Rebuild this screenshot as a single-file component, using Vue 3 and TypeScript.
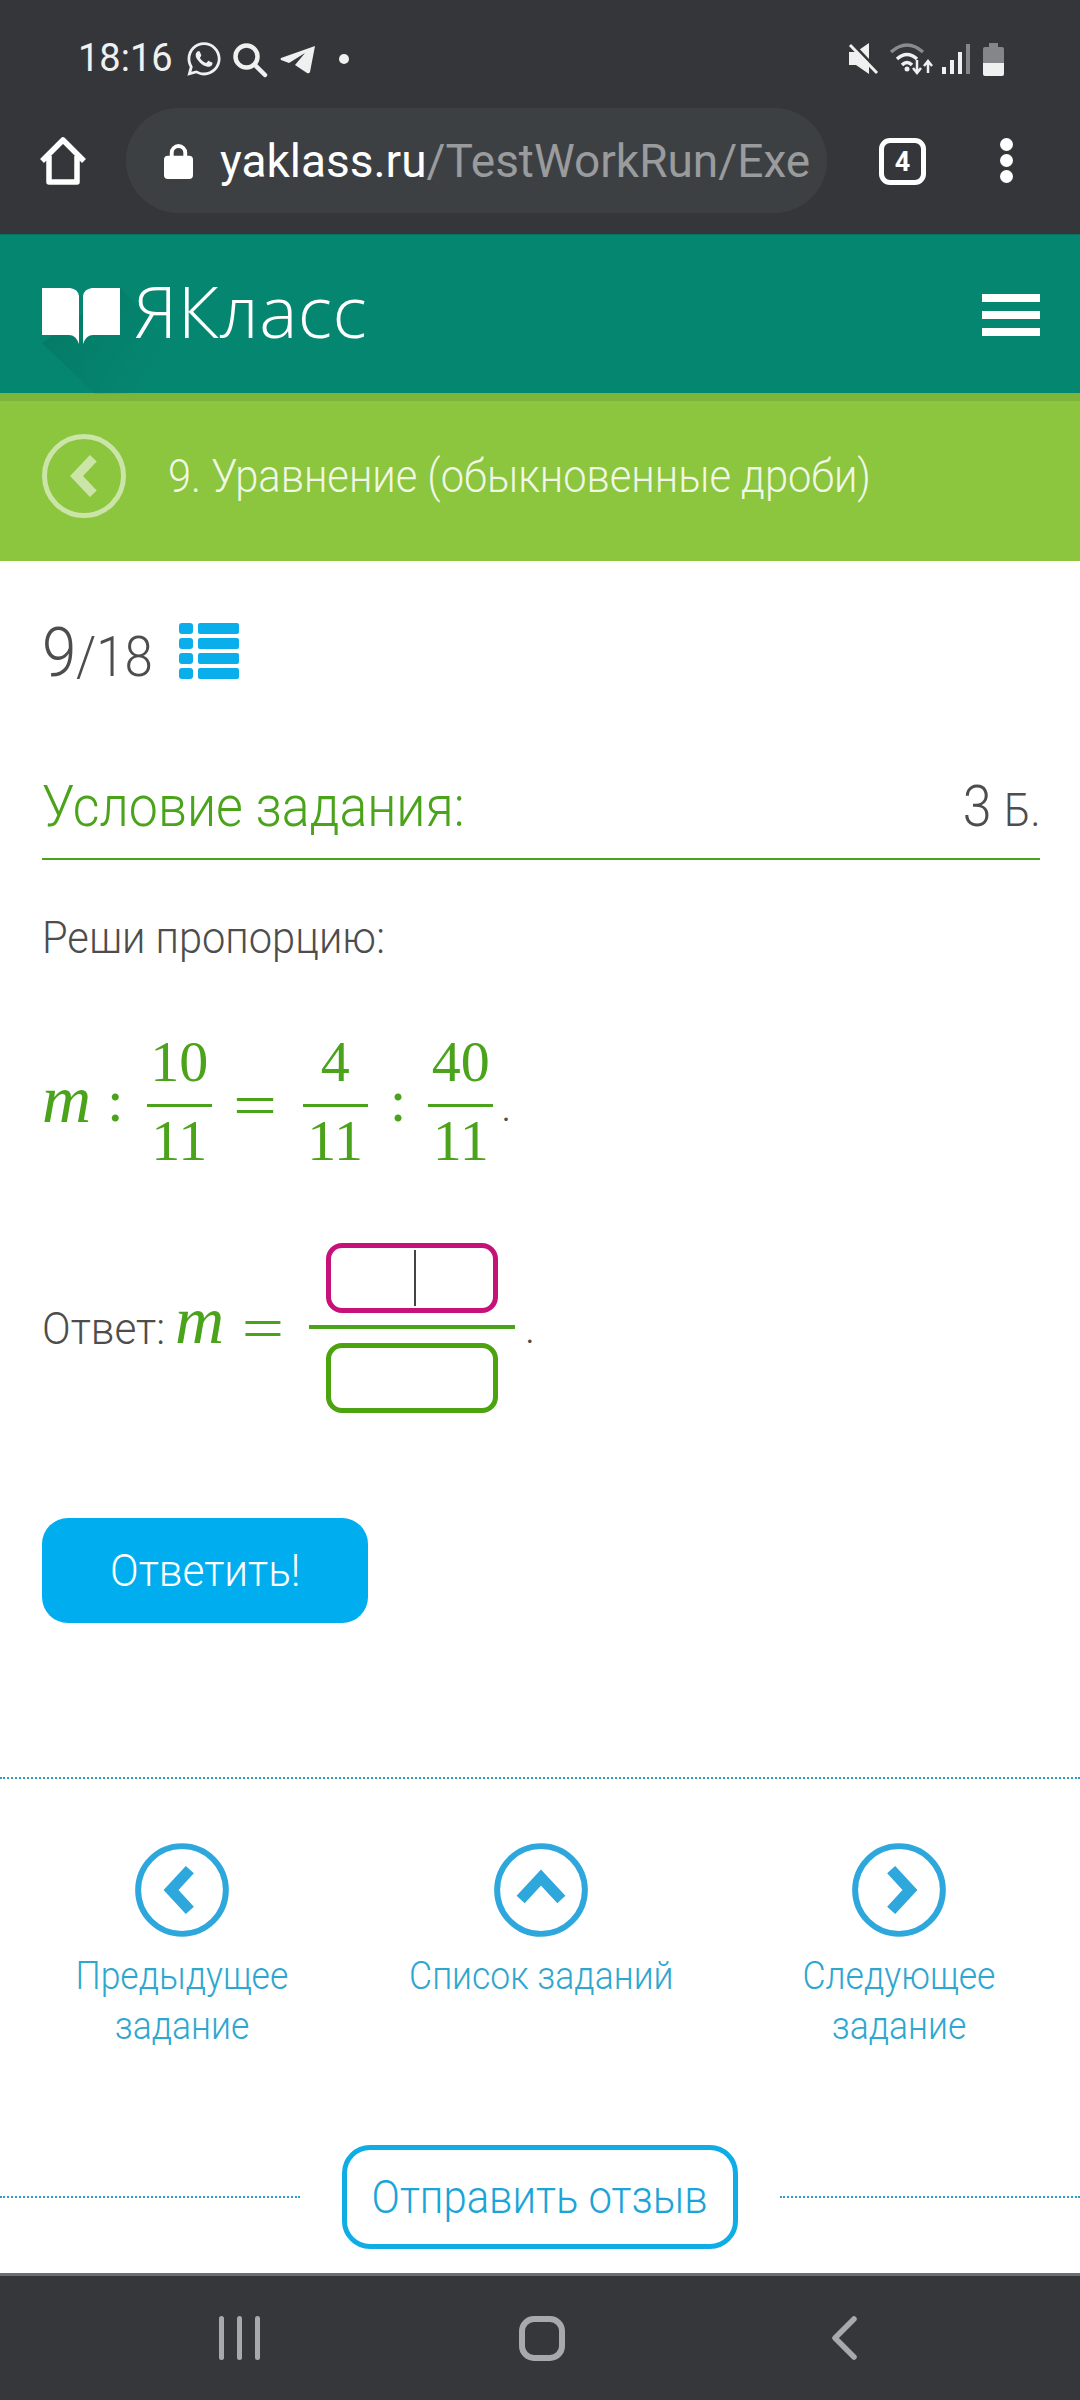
<script setup lang="ts">
interface NavLink {
  label: string[]
  chevron: string
}

const navLinks: NavLink[] = [
  { label: ['Предыдущее', 'задание'], chevron: 'M35 17 L23 30 L35 43' },
  { label: ['Список заданий'], chevron: 'M17 36 L30 22 L43 36' },
  { label: ['Следующее', 'задание'], chevron: 'M25 17 L37 30 L25 43' },
]
</script>

<template>
  <div class="screen">
    <div class="status">
      <span class="status__time">18:16</span>
      <svg class="status__wa" viewBox="0 0 24 24" fill="#f0f0f0">
        <path d="M12.04 2C6.58 2 2.13 6.45 2.13 11.91C2.13 13.66 2.59 15.36 3.45 16.86L2.05 22L7.3 20.62C8.75 21.41 10.38 21.83 12.04 21.83C17.5 21.83 21.95 17.38 21.95 11.92C21.95 9.27 20.92 6.78 19.05 4.91C17.18 3.03 14.69 2 12.04 2M12.05 3.67C14.25 3.67 16.31 4.53 17.87 6.09C19.42 7.65 20.28 9.72 20.28 11.92C20.28 16.46 16.58 20.15 12.04 20.15C10.56 20.15 9.11 19.76 7.85 19L7.55 18.83L4.43 19.65L5.26 16.61L5.06 16.29C4.24 15 3.8 13.47 3.8 11.91C3.81 7.37 7.5 3.67 12.05 3.67M8.53 7.33C8.37 7.33 8.1 7.39 7.87 7.64C7.65 7.89 7 8.5 7 9.71C7 10.93 7.89 12.1 8 12.27C8.14 12.44 9.76 14.94 12.25 16C12.84 16.27 13.3 16.42 13.66 16.53C14.25 16.72 14.79 16.69 15.22 16.63C15.7 16.56 16.68 16.03 16.89 15.45C17.1 14.87 17.1 14.38 17.04 14.27C16.97 14.17 16.81 14.11 16.56 14C16.31 13.86 15.09 13.26 14.87 13.18C14.64 13.1 14.5 13.06 14.31 13.3C14.15 13.55 13.67 14.11 13.53 14.27C13.38 14.44 13.24 14.46 13 14.34C12.74 14.21 11.94 13.95 11 13.11C10.26 12.45 9.77 11.64 9.62 11.39C9.5 11.15 9.61 11 9.73 10.89C9.84 10.78 10 10.6 10.1 10.45C10.23 10.31 10.27 10.2 10.35 10.04C10.43 9.87 10.39 9.73 10.33 9.61C10.27 9.5 9.77 8.26 9.56 7.77C9.36 7.29 9.16 7.35 9 7.34C8.86 7.34 8.7 7.33 8.53 7.33Z" />
      </svg>
      <svg class="status__search" viewBox="0 0 36 36" fill="none" stroke="#f0f0f0" stroke-width="4.5" stroke-linecap="round">
        <circle cx="14.5" cy="14.5" r="11" />
        <path d="M23 23 L33 33" />
      </svg>
      <svg class="status__plane" viewBox="0 0 36 30" fill="#f0f0f0">
        <path d="M35 1 L1 13 Q0 14 1 15 L9 18 L25 8 L15 20 L27 28 Q29 29 30 27 Z" />
      </svg>
      <span class="status__dot"></span>
      <span class="status__spacer"></span>
      <svg class="status__mute" viewBox="0 0 32 32">
        <path d="M1 9 H8 L21 0 V31 L8 22 H1 Z" fill="#f0f0f0" />
        <path d="M4 0 L31 29" stroke="#35363a" stroke-width="3" />
        <path d="M2 2 L29 30" stroke="#f0f0f0" stroke-width="3" />
      </svg>
      <svg class="status__wifi" viewBox="0 0 46 34" fill="none">
        <path d="M2 10 Q18 -4 34 10" stroke="#8a8b8d" stroke-width="3.5" />
        <path d="M8 17 Q18 8 28 17" stroke="#f0f0f0" stroke-width="3.5" />
        <path d="M13 23 Q18 18 23 23" stroke="#f0f0f0" stroke-width="3.5" />
        <circle cx="18" cy="27" r="2.5" fill="#f0f0f0" />
        <path d="M28 18 V30 M24 26 L28 31 L32 26 M39 31 V20 M35 24 L39 19 L43 24" stroke="#f0f0f0" stroke-width="2.5" />
      </svg>
      <svg class="status__signal" viewBox="0 0 28 32">
        <rect x="0" y="24" width="4" height="7" fill="#f0f0f0" />
        <rect x="8" y="17" width="4" height="14" fill="#f0f0f0" />
        <rect x="16" y="9" width="4" height="22" fill="#f0f0f0" />
        <rect x="24" y="1" width="4" height="30" fill="#85868a" />
      </svg>
      <svg class="status__battery" viewBox="0 0 21 33">
        <path d="M6 0 H15 V4 H19 Q21 4 21 6 V20 H0 V6 Q0 4 2 4 H6 Z" fill="#85868a" />
        <path d="M0 20 H21 V31 Q21 33 19 33 H2 Q0 33 0 31 Z" fill="#f0f0f0" />
      </svg>
    </div>

    <div class="toolbar">
      <svg class="toolbar__home" viewBox="0 0 48 48" fill="none" stroke="#fff" stroke-width="5.5" stroke-linejoin="round">
        <path d="M3 24 L24 3 L45 24 M10 19 V45 H38 V19" />
      </svg>
      <div class="url">
        <svg class="url__lock" viewBox="0 0 30 37">
          <path d="M8 14 V10 A7 7 0 0 1 22 10 V14" fill="none" stroke="#fff" stroke-width="4" />
          <rect x="0" y="13" width="30" height="24" rx="4" fill="#fff" />
        </svg>
        <span class="url__text">yaklass.ru<span class="url__path">/TestWorkRun/Exe</span></span>
      </div>
      <span class="toolbar__tabs">4</span>
      <div class="toolbar__menu">
        <i></i><i></i><i></i>
      </div>
    </div>

    <header class="brand">
      <svg class="brand__shadow" viewBox="0 0 300 159">
        <defs>
          <linearGradient id="brandFade" x1="0" y1="0" x2="1" y2="0.35">
            <stop offset="0.1" stop-color="#04705e" stop-opacity="0.55" />
            <stop offset="0.8" stop-color="#04705e" stop-opacity="0" />
          </linearGradient>
        </defs>
        <path d="M42 108 L120 52 L218 159 H95 Z" fill="url(#brandFade)" />
      </svg>
      <svg class="brand__book" viewBox="0 0 78 56" fill="#fff">
        <path d="M0 0 H28 Q36 1 37 8 V56 Q34 47 27 47 H0 Z" />
        <path d="M78 0 H50 Q42 1 41 8 V56 Q44 47 51 47 H78 Z" />
      </svg>
      <span class="brand__name">ЯКласс</span>
      <div class="brand__burger">
        <i></i><i></i><i></i>
      </div>
    </header>

    <div class="topic">
      <span class="topic__back">
        <svg viewBox="0 0 30 44" fill="none" stroke="#fff" stroke-opacity="0.55" stroke-width="10">
          <path d="M25 3 L7 22 L25 41" />
        </svg>
      </span>
      <span class="narrow topic__title">9. Уравнение (обыкновенные дроби)</span>
    </div>

    <main class="task">
      <div class="counter">
        <span class="narrow counter__num">9</span><span class="narrow counter__total">/18</span>
        <span class="counter__list">
          <template v-for="n in 4" :key="n">
            <i class="counter__bullet"></i><i class="counter__bar"></i>
          </template>
        </span>
      </div>

      <div class="cond">
        <span class="narrow cond__title">Условие задания:</span>
        <span class="narrow cond__points">3 <small>Б.</small></span>
      </div>

      <p class="narrow prompt">Реши пропорцию:</p>

      <div class="math math--task">
        <i class="math__var">m</i>
        <span class="math__op math__op--colon-first">:</span>
        <span class="frac"><span>10</span><span>11</span></span>
        <span class="math__op math__op--eq">=</span>
        <span class="frac"><span>4</span><span>11</span></span>
        <span class="math__op math__op--colon">:</span>
        <span class="frac"><span>40</span><span>11</span></span>
        <span class="math__period">.</span>
      </div>

      <div class="math answer">
        <span class="narrow answer__label">Ответ:</span>
        <i class="math__var">m</i>
        <span class="math__op answer__eq">=</span>
        <span class="answer__frac">
          <span class="box box--focus"><i class="box__caret"></i></span>
          <span class="answer__bar"></span>
          <span class="box"></span>
        </span>
        <span class="math__period">.</span>
      </div>

      <button type="button" class="submit"><span class="narrow submit__text">Ответить!</span></button>
    </main>

    <nav class="pager">
      <a v-for="link in navLinks" :key="link.label[0]" class="pager__item">
        <svg class="pager__icon" viewBox="0 0 60 60" fill="none" stroke="#2ea7dc">
          <circle cx="30" cy="30" r="28" stroke-width="3.8" />
          <path :d="link.chevron" stroke-width="7" />
        </svg>
        <span class="pager__label">
          <span v-for="line in link.label" :key="line" class="narrow">{{ line }}</span>
        </span>
      </a>
    </nav>

    <div class="feedback">
      <span class="feedback__rule"></span>
      <button type="button" class="feedback__btn"><span class="narrow">Отправить отзыв</span></button>
      <span class="feedback__rule"></span>
    </div>

    <div class="sysnav">
      <svg class="sysnav__recents" viewBox="0 0 41 44" fill="#a8a9ab">
        <rect x="0" y="0" width="5" height="44" rx="2.5" />
        <rect x="18" y="0" width="5" height="44" rx="2.5" />
        <rect x="36" y="0" width="5" height="44" rx="2.5" />
      </svg>
      <span class="sysnav__home"></span>
      <svg class="sysnav__back" viewBox="0 0 26 44" fill="none" stroke="#a8a9ab" stroke-width="5.5" stroke-linecap="round" stroke-linejoin="round">
        <path d="M23 3 L4 22 L23 41" />
      </svg>
    </div>
  </div>
</template>

<style scoped>
.screen {
  position: relative;
  display: flex;
  flex-direction: column;
  width: 1080px;
  height: 2400px;
  overflow: hidden;
  background: #fff;
  font-family: Roboto, 'Noto Sans', sans-serif;
  font-weight: 300;
  color: #4d4d4d;
}

/* the site's light face runs narrower than installed Roboto */
.narrow {
  display: inline-block;
  transform: scaleX(0.91);
  white-space: nowrap;
}

.status {
  display: flex;
  align-items: center;
  height: 108px;
  padding: 10px 76px 0 78px;
  box-sizing: border-box;
  background: #35363a;
  color: #f0f0f0;
}

.status__time {
  width: 107px;
  font-size: 38px;
  font-weight: 400;
  line-height: 44px;
  margin-top: -2px;
}

.status__wa {
  width: 40px;
  height: 40px;
  margin: 0 0 0 -1px;
}

.status__search {
  width: 36px;
  height: 36px;
  margin: 2px 0 0 8px;
}

.status__plane {
  width: 36px;
  height: 30px;
  margin: 2px 0 0 12px;
}

.status__dot {
  width: 10px;
  height: 10px;
  margin: 0 0 0 23px;
  border-radius: 50%;
  background: #f0f0f0;
}

.status__spacer {
  flex: 1;
}

.status__mute {
  width: 32px;
  height: 32px;
}

.status__wifi {
  width: 46px;
  height: 34px;
  margin-left: 9px;
}

.status__signal {
  width: 28px;
  height: 32px;
  margin-left: 7px;
}

.status__battery {
  width: 21px;
  height: 33px;
  margin-left: 13px;
}

.toolbar {
  display: flex;
  align-items: flex-start;
  height: 126px;
  box-sizing: border-box;
  padding-left: 39px;
  background: #35363a;
}

.toolbar__home {
  width: 48px;
  height: 48px;
  margin-top: 29px;
}

.url {
  display: flex;
  align-items: center;
  width: 701px;
  height: 105px;
  margin-left: 39px;
  padding-left: 38px;
  box-sizing: border-box;
  border-radius: 53px;
  background: #3d4043;
}

.url__lock {
  width: 29px;
  height: 36px;
  flex: none;
}

.url__text {
  margin-left: 27px;
  font-size: 46px;
  font-weight: 400;
  color: #fff;
  white-space: nowrap;
}

.url__path {
  color: #9a9b9d;
}

.toolbar__tabs {
  display: flex;
  align-items: center;
  justify-content: center;
  width: 47px;
  height: 47px;
  margin: 30px 0 0 52px;
  box-sizing: border-box;
  border: 5px solid #fff;
  border-radius: 11px;
  font-size: 27px;
  font-weight: 700;
  color: #fff;
}

.toolbar__menu {
  display: flex;
  flex-direction: column;
  gap: 3px;
  margin: 30px 0 0 74px;
}

.toolbar__menu i {
  width: 13px;
  height: 13px;
  border-radius: 50%;
  background: #fff;
}

.brand {
  position: relative;
  display: flex;
  align-items: flex-start;
  height: 159px;
  padding: 53px 40px 0 42px;
  box-sizing: border-box;
  background: #058670;
  border-top: 1px solid #04705e;
}

.brand__shadow {
  position: absolute;
  left: 0;
  top: 0;
  width: 300px;
  height: 159px;
}

.brand__book {
  position: relative;
  width: 78px;
  height: 56px;
}

.brand__name {
  position: relative;
  margin: -26px 0 0 14px;
  font-family: 'Open Sans', sans-serif;
  font-size: 72px;
  font-weight: 300;
  line-height: 96px;
  letter-spacing: 0.5px;
  color: #fff;
}

.brand__burger {
  position: relative;
  display: flex;
  flex-direction: column;
  gap: 9px;
  margin: 6px 0 0 auto;
}

.brand__burger i {
  width: 58px;
  height: 8px;
  background: #fff;
}

.topic {
  display: flex;
  align-items: center;
  height: 168px;
  padding: 0 42px 10px;
  box-sizing: border-box;
  background: #8cc63f;
  border-top: 8px solid #7cb53a;
}

.topic__back {
  display: flex;
  align-items: center;
  justify-content: center;
  width: 84px;
  height: 84px;
  box-sizing: border-box;
  border: 5px solid rgba(255, 255, 255, 0.55);
  border-radius: 50%;
  flex: none;
}

.topic__back svg {
  width: 28px;
  height: 42px;
}

.topic__title {
  margin-left: 42px;
  font-size: 46px;
  color: rgba(255, 255, 255, 0.88);
  transform: scaleX(0.905);
  transform-origin: left center;
}

.task {
  display: flex;
  flex-direction: column;
  align-items: flex-start;
  height: 1216px;
  padding: 64px 40px 0 42px;
  box-sizing: border-box;
}

.counter {
  display: flex;
  align-items: baseline;
  height: 56px;
  line-height: 56px;
}

.counter__num {
  margin-right: -4px;
  font-size: 68px;
  transform-origin: left center;
}

.counter__total {
  margin-right: -8px;
  font-size: 56px;
  transform-origin: left center;
}

.counter__list {
  display: grid;
  grid-template-columns: 14px 41px;
  grid-auto-rows: 11px;
  gap: 4px 5px;
  align-self: flex-start;
  margin-left: 27px;
  margin-top: -2px;
}

.counter__bullet {
  border-radius: 3px;
  background: #0aaeea;
}

.counter__bar {
  border-radius: 2px;
  background: #0aaeea;
}

.cond {
  display: flex;
  align-items: baseline;
  justify-content: space-between;
  align-self: stretch;
  margin-top: 90px;
  padding-bottom: 12px;
  border-bottom: 2px solid #4aa31a;
  line-height: 72px;
}

.cond__title {
  font-size: 57px;
  color: #4aa31a;
  transform-origin: left center;
}

.cond__points {
  font-size: 57px;
  transform-origin: right center;
}

.cond__points small {
  font-size: 46px;
}

.prompt {
  margin: 48px 0 0;
  font-size: 45px;
  line-height: 60px;
  transform: scaleX(0.925);
  transform-origin: left center;
}

.math {
  display: flex;
  align-items: center;
  font-family: 'Liberation Serif', serif;
  font-weight: 400;
  color: #4aa31a;
}

.math--task {
  margin-top: 64px;
  height: 138px;
}

.math--task .math__var {
  margin-top: -5px;
}

.math__var {
  font-size: 68px;
  font-style: italic;
  line-height: 78px;
}

.math__op {
  font-size: 60px;
  line-height: 1;
}

.math__op--colon-first {
  margin: 0 23px 0 16px;
}

.math__op--colon {
  margin: 0 22px;
}

.math__op--eq {
  margin: 7px 31px 0 26px;
  transform: scaleX(1.3);
}

.frac {
  display: inline-flex;
  flex-direction: column;
  align-items: center;
  width: 65px;
  font-size: 58px;
  line-height: 58px;
}

.frac span:first-child {
  width: 100%;
  text-align: center;
  padding-bottom: 13px;
  border-bottom: 3px solid #4aa31a;
  margin-bottom: 5px;
}

.math__period {
  margin: 20px 0 0 9px;
  font-size: 30px;
  color: #4d4d4d;
}

.answer {
  height: 170px;
  margin-top: 73px;
}

.answer__label {
  margin-right: 2px;
  font-family: Roboto, 'Noto Sans', sans-serif;
  font-size: 45px;
  font-weight: 300;
  color: #4d4d4d;
  transform: scaleX(0.94);
  transform-origin: left center;
}

.answer .math__var {
  margin-top: -16px;
}

.answer__eq {
  margin: 0 29px 0 22px;
  transform: scaleX(1.25);
}

.answer .math__period {
  margin: 10px 0 0 11px;
}

.answer__frac {
  display: flex;
  flex-direction: column;
  align-items: center;
  width: 206px;
}

.answer__bar {
  align-self: stretch;
  height: 4px;
  margin: 12px 0 14px;
  background: #4aa31a;
}

.box {
  position: relative;
  width: 172px;
  height: 70px;
  box-sizing: border-box;
  border: 5px solid #4aa30f;
  border-radius: 16px;
}

.box--focus {
  border-color: #c6117a;
}

.box__caret {
  position: absolute;
  left: 83px;
  top: 2px;
  width: 2px;
  height: 56px;
  background: #444;
}

.submit {
  width: 326px;
  height: 105px;
  margin-top: 105px;
  border: none;
  border-radius: 26px;
  background: #00aeef;
  font: inherit;
  font-size: 45px;
  color: #fff;
}

.submit__text {
  transform: scaleX(0.94);
}

.pager {
  display: grid;
  grid-template-columns: 364px 354px 362px;
  height: 340px;
  padding-top: 64px;
  box-sizing: border-box;
  border-top: 2px dotted #2b9fc7;
}

.pager__item {
  display: flex;
  flex-direction: column;
  align-items: center;
  color: #2ea7d0;
}

.pager__icon {
  width: 94px;
  height: 94px;
}

.pager__label {
  display: flex;
  flex-direction: column;
  align-items: center;
  margin-top: 14px;
  font-size: 39px;
  line-height: 50px;
}

.feedback {
  display: flex;
  align-items: center;
  justify-content: space-between;
  height: 104px;
  margin-top: 28px;
}

.feedback__rule {
  width: 300px;
  border-top: 2px dotted #2b9fc7;
}

.feedback__btn {
  width: 396px;
  height: 104px;
  box-sizing: border-box;
  border: 5px solid #0fade6;
  border-radius: 28px;
  background: #fff;
  font: inherit;
  font-size: 46px;
  color: #1aa4d8;
}

.sysnav {
  position: absolute;
  left: 0;
  right: 0;
  bottom: 0;
  display: flex;
  align-items: center;
  height: 127px;
  box-sizing: border-box;
  background: #36373b;
  border-top: 3px solid #6d6e71;
}

.sysnav__recents {
  width: 41px;
  height: 44px;
  margin-left: 219px;
}

.sysnav__home {
  width: 46px;
  height: 45px;
  margin-left: 259px;
  box-sizing: border-box;
  border: 6px solid #a8a9ab;
  border-radius: 15px;
}

.sysnav__back {
  width: 26px;
  height: 44px;
  margin-left: 266px;
}
</style>

<style>
html,
body {
  margin: 0;
  background: #fff;
}
</style>
